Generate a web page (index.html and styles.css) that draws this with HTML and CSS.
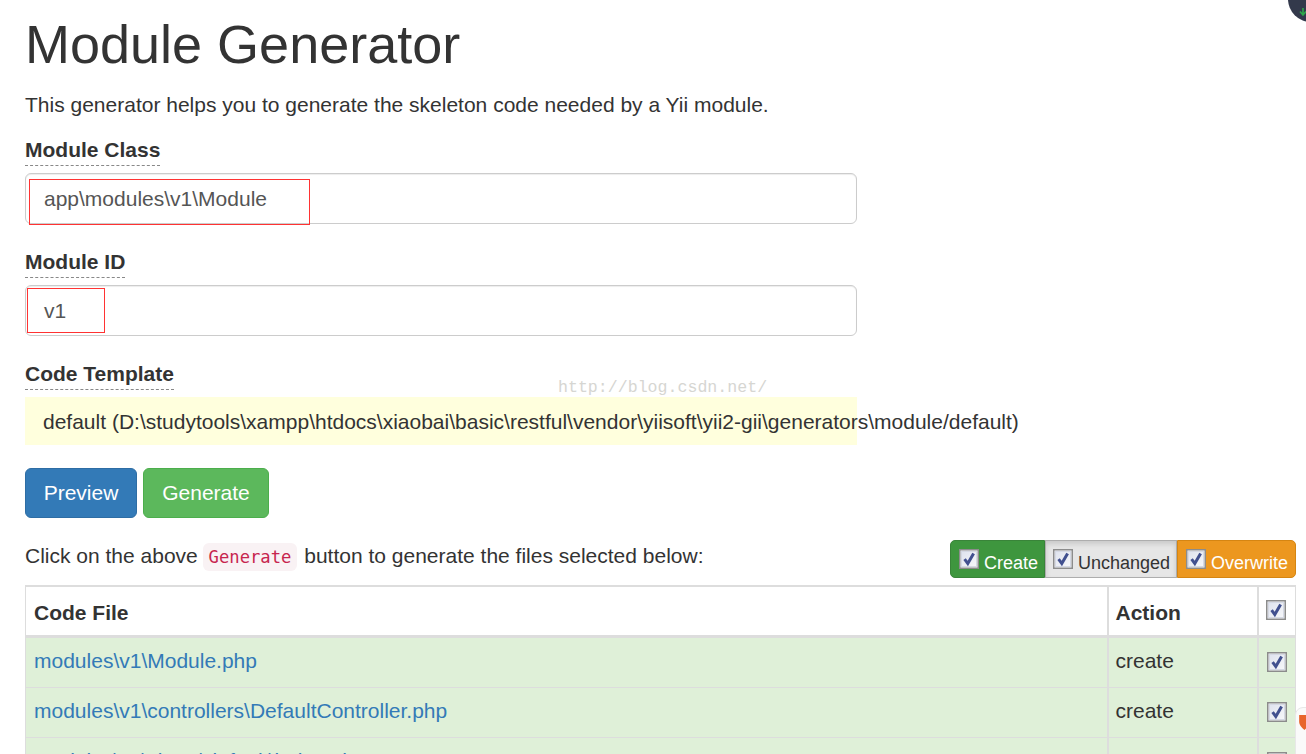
FILE: index.html
```html
<!DOCTYPE html>
<html lang="en">
<head>
<meta charset="utf-8">
<title>Module Generator</title>
<link rel="stylesheet" href="styles.css">
</head>
<body>
<svg class="defs" width="0" height="0" aria-hidden="true">
  <defs>
    <linearGradient id="boxfill" x1="0" y1="0" x2="1" y2="1">
      <stop offset="0" stop-color="#dfe3ee"/>
      <stop offset="1" stop-color="#f6f7fa"/>
    </linearGradient>
  </defs>
  <symbol id="check" viewBox="0 0 20 20">
    <rect x="0.75" y="0.75" width="18.5" height="18.5" fill="#f4f5f8" stroke="#8c8c8c" stroke-width="1.5"/>
    <rect x="2.5" y="2.5" width="15" height="15" fill="url(#boxfill)" stroke="#d5d9e4"/>
    <path d="M5.6 10.2 8.8 14.6 14.6 4.6" fill="none" stroke="#41508f" stroke-width="3"/>
  </symbol>
</svg>
<main class="page">
  <h1 class="title">Module Generator</h1>
  <p class="lead">This generator helps you to generate the skeleton code needed by a Yii module.</p>

  <div class="field">
    <label class="hint">Module Class</label>
    <div class="input">app\modules\v1\Module<span class="mark mark-class"></span></div>
  </div>
  <div class="field">
    <label class="hint">Module ID</label>
    <div class="input">v1<span class="mark mark-id"></span></div>
  </div>
  <div class="field field-template">
    <label class="hint">Code Template</label>
    <div class="sticky"><span class="sticky-text">default (D:\studytools\xampp\htdocs\xiaobai\basic\restful\vendor\yiisoft\yii2-gii\generators\module/default)</span></div>
    <span class="watermark">http://blog.csdn.net/</span>
  </div>

  <div class="buttons">
    <span class="btn btn-blue">Preview</span>
    <span class="btn btn-green">Generate</span>
  </div>

  <div class="toolbar">
    <p class="note">Click on the above <code class="code">Generate</code> button to generate the files selected below:</p>
    <div class="filters">
      <span class="filter f-create"><svg class="box"><use href="#check"/></svg>Create</span>
      <span class="filter f-same"><svg class="box"><use href="#check"/></svg>Unchanged</span>
      <span class="filter f-over"><svg class="box"><use href="#check"/></svg>Overwrite</span>
    </div>
  </div>

  <table class="files">
    <thead>
      <tr><th>Code File</th><th class="c-action">Action</th><th class="c-check"><svg class="box"><use href="#check"/></svg></th></tr>
    </thead>
    <tbody>
      <tr><td><a class="link">modules\v1\Module.php</a></td><td>create</td><td class="c-check"><svg class="box"><use href="#check"/></svg></td></tr>
      <tr><td><a class="link">modules\v1\controllers\DefaultController.php</a></td><td>create</td><td class="c-check"><svg class="box"><use href="#check"/></svg></td></tr>
      <tr><td><a class="link">modules\v1\views\default\index.php</a></td><td>create</td><td class="c-check"><svg class="box"><use href="#check"/></svg></td></tr>
    </tbody>
  </table>
</main>

<div class="corner-top"><svg class="corner-arrow" viewBox="0 0 8 8"><path d="M4 0V6M1 3.5 4 7 7 3.5" fill="none" stroke="#2fa84a" stroke-width="1.6"/></svg></div>
<div class="corner-bottom"><svg class="corner-shield" viewBox="0 0 10 14"><path d="M0 0H10V6C10 10 7 12 5 14 3 12 0 10 0 6Z" fill="#e8652c"/></svg></div>
</body>
</html>
```
FILE: styles.css
```css
html, body {
  margin: 0;
  height: 754px;
  overflow: hidden;
  background: #fff;
}
body {
  font-family: "Liberation Sans", Arial, sans-serif;
  font-size: 21px;
  line-height: 30px;
  color: #333;
  position: relative;
}
.defs { position: absolute; }
.page {
  padding: 0 10px 0 25px;
  position: relative;
}
.title {
  margin: 0;
  padding-top: 14px;
  font-size: 54px;
  font-weight: 400;
  line-height: 60px;
  color: #333;
}
.lead { margin: 16px 0 0; }
.field {
  width: 832px;
  margin-top: 15px;
  position: relative;
}
.field + .field { margin-top: 23px; }
.hint {
  display: inline-block;
  font-weight: 700;
  line-height: 30px;
  border-bottom: 1px dashed #888;
  margin-bottom: 7px;
  vertical-align: top;
}
.input {
  box-sizing: border-box;
  height: 51px;
  padding: 10px 18px;
  border: 1px solid #ccc;
  border-radius: 6px;
  box-shadow: inset 0 1px 1px rgba(0, 0, 0, .075);
  color: #555;
  position: relative;
}
.mark {
  position: absolute;
  border: 1px solid #f33;
  box-sizing: border-box;
}
.mark-class { left: 3px; top: 5px; width: 281px; height: 46px; }
.mark-id { left: 1px; top: 2px; width: 78px; height: 45px; }
.sticky {
  height: 48px;
  background: #ffd;
  padding: 10px 18px;
  box-sizing: border-box;
  white-space: nowrap;
}
.watermark {
  position: absolute;
  left: 533px;
  top: 19px;
  font-family: "Liberation Mono", "Courier New", monospace;
  font-size: 16.6px;
  line-height: 20px;
  color: #d6d6d2;
}
.buttons {
  display: flex;
  gap: 6px;
  margin-top: 23px;
}
.btn {
  box-sizing: border-box;
  height: 50px;
  padding: 9px 0;
  text-align: center;
  border-radius: 6px;
  border: 1px solid;
  color: #fff;
}
.btn-blue { width: 112px; background: #337ab7; border-color: #2e6da4; }
.btn-green { width: 126px; background: #5cb85c; border-color: #4cae4c; }
.toolbar {
  display: flex;
  justify-content: space-between;
  align-items: flex-start;
  margin-top: 22px;
  height: 45px;
  width: 1271px;
}
.note { margin: 1px 0 0; }
.code {
  font-family: "DejaVu Sans Mono", "Liberation Mono", monospace;
  font-size: 17.2px;
  padding: 4px 6px;
  margin: 0 1px 0 -1px;
  color: #c7254e;
  background: #f9f2f4;
  border-radius: 6px;
}
.filters {
  display: flex;
  height: 38px;
}
.filter {
  box-sizing: border-box;
  height: 38px;
  padding: 8px 6px 0 8px;
  display: flex;
  align-items: flex-start;
  gap: 5px;
  font-size: 18px;
  line-height: 28px;
  border: 1px solid;
}
.f-create { width: 95px; background: #3e963e; border-color: #398439; color: #fff; border-radius: 5px 0 0 5px; }
.f-same { width: 132px; padding-left: 7px; background: #e6e6e6; border-color: #adadad; color: #333; box-shadow: inset 0 3px 5px rgba(0,0,0,.125); }
.f-over { width: 119px; background: #ec971f; border-color: #d58512; color: #fff; border-radius: 0 5px 5px 0; }
.box {
  width: 20px;
  height: 20px;
  flex: none;
  display: block;
}
.files {
  width: 1271px;
  border-collapse: collapse;
  table-layout: fixed;
}
.files th, .files td {
  box-sizing: border-box;
  border: 2px solid #ddd;
  text-align: left;
}
.files th:first-child, .files td:first-child { border-left-width: 1px; }
.files th:last-child, .files td:last-child { border-right-width: 1px; }
.files th { font-weight: 700; padding: 11px 8px 7px; }
.files thead th { border-bottom-width: 3px; }
.files td { background: #dff0d8; padding: 8px 8px 11px; border-top-width: 1px; border-bottom-width: 1px; }
.files .c-action { width: 150px; padding-left: 7px; }
.files .c-check { width: 38px; vertical-align: top; }
.files th.c-check { padding: 13px 0 0 7px; }
.files td.c-check { padding: 14px 0 0 8px; }
.files tr td:nth-child(2) { padding-left: 7px; }
.link { color: #337ab7; }
.corner-top {
  position: absolute;
  top: -24px;
  left: 1288px;
  width: 46px;
  height: 46px;
  border-radius: 50%;
  background: #33394b;
}
.corner-arrow {
  position: absolute;
  left: 11px;
  top: 32px;
  width: 8px;
  height: 8px;
}
.corner-bottom {
  position: absolute;
  left: 1295px;
  top: 707px;
  width: 40px;
  height: 60px;
  background: #fafafa;
  border: 1px solid #e8e8e8;
  border-radius: 8px;
}
.corner-shield {
  position: absolute;
  left: 3px;
  top: 7px;
  width: 11px;
  height: 15px;
}
```
